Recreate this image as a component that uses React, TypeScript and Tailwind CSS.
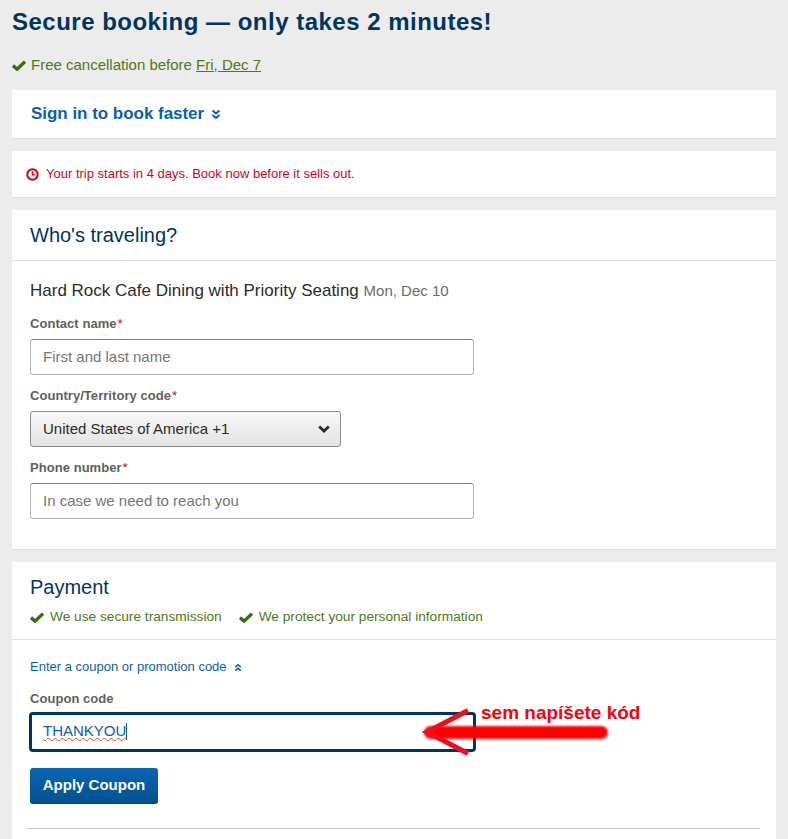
import React from "react";

const font = { fontFamily: '"Liberation Sans", Arial, sans-serif' };

function Check({ className }: { className: string }) {
  return (
    <svg viewBox="0 0 14 11" className={className} aria-hidden="true">
      <path d="M1 5.6 L5 9.2 L13 1.6" fill="none" stroke="#2f6f0e" strokeWidth="3.3" />
    </svg>
  );
}

function Chevrons({ up, className }: { up?: boolean; className: string }) {
  return (
    <svg viewBox="0 0 10 10" className={className} aria-hidden="true">
      <g fill="none" stroke="#0a5fad" strokeWidth="2" transform={up ? "rotate(180 5 5)" : undefined}>
        <path d="M1.5 1 L5 4 L8.5 1" />
        <path d="M1.5 5.5 L5 8.5 L8.5 5.5" />
      </g>
    </svg>
  );
}

function Label({ text, star = true, className = "" }: { text: string; star?: boolean; className?: string }) {
  return (
    <div className={`text-[13px] leading-4 font-bold text-[#5f5f5f] tracking-[0.05px] ${className}`}>
      {text}
      {star && <span className="font-normal text-[#d0021b] ml-[1px]">*</span>}
    </div>
  );
}

function TextBox({ placeholder }: { placeholder: string }) {
  return (
    <div className="w-[444px] h-[36px] mt-[7px] border border-[#b5b5b5] border-t-[#808080] rounded-[3px] pl-[12px] flex items-center text-[15px] text-[#767676] bg-white">
      {placeholder}
    </div>
  );
}

export default function App() {
  return (
    <div style={font} className="relative w-[788px] h-[839px] overflow-hidden bg-[#ececec]">
      <div className="px-[12px]">
        <h1 className="h-[45px] pt-[6px] text-[24px] leading-[32px] font-bold text-[#003560] tracking-[0.49px]">
          Secure booking — only takes 2 minutes!
        </h1>
        <div className="h-[45px] pb-[5px] flex items-center text-[15px] text-[#4d7a16]">
          <Check className="w-[14px] h-[11px] mr-[5px]" />
          <span>
            Free cancellation before <span className="underline">Fri, Dec 7</span>
          </span>
        </div>

        <section className="h-[48px] bg-white pl-[19px] flex items-center shadow-[0_1px_1px_#dedede]">
          <span className="text-[17px] font-bold text-[#0a5fad] tracking-[-0.03px]">Sign in to book faster</span>
          <Chevrons className="w-[10px] h-[11px] ml-[7px]" />
        </section>

        <section className="mt-[13px] h-[46px] bg-white pl-[14px] flex items-center text-[13px] text-[#d0021b] shadow-[0_1px_1px_#dedede]">
          <svg viewBox="0 0 14 14" className="w-[13px] h-[13px] mr-[7px]" aria-hidden="true">
            <circle cx="7" cy="7" r="5.6" fill="none" stroke="#d0021b" strokeWidth="2.2" />
            <path d="M7 3.6 V7.4 H10" fill="none" stroke="#d0021b" strokeWidth="1.6" />
          </svg>
          Your trip starts in 4 days. Book now before it sells out.
        </section>

        <section className="mt-[13px] h-[339px] bg-white shadow-[0_1px_1px_#dedede]">
          <div className="h-[51px] pl-[18px] flex items-center border-b border-[#e2e2e2] text-[20px] text-[#003560]">
            Who's traveling?
          </div>
          <div className="px-[18px]">
            <div className="pt-[20px] h-[50px] text-[17px] leading-5 text-[#2b2b2b]">
              Hard Rock Cafe Dining with Priority Seating{" "}
              <span className="text-[15px] text-[#6b6b6b]">Mon, Dec 10</span>
            </div>
            <Label text="Contact name" className="mt-[5px]" />
            <TextBox placeholder="First and last name" />
            <Label text="Country/Territory code" className="mt-[13px]" />
            <div className="w-[311px] h-[36px] mt-[7px] border border-[#8a8a8a] rounded-[3px] pl-[12px] pr-[10px] flex items-center justify-between text-[15px] text-[#2b2b2b] bg-gradient-to-b from-[#f7f7f7] to-[#e4e4e4]">
              United States of America +1
              <svg viewBox="0 0 12 8" className="w-[12px] h-[8px]" aria-hidden="true">
                <path d="M1.2 1.4 L6 6 L10.8 1.4" fill="none" stroke="#2b2b2b" strokeWidth="2.8" />
              </svg>
            </div>
            <Label text="Phone number" className="mt-[13px]" />
            <TextBox placeholder="In case we need to reach you" />
          </div>
        </section>

        <section className="mt-[13px] h-[300px] bg-white">
          <div className="h-[78px] border-b border-[#e2e2e2] px-[18px]">
            <div className="pt-[13px] h-[43px] text-[20px] leading-6 text-[#003560]">Payment</div>
            <div className="mt-[2px] flex items-center text-[13.7px] text-[#4d7a16]">
              <Check className="w-[14px] h-[11px] mr-[6px]" />
              <span className="mr-[17px]">We use secure transmission</span>
              <Check className="w-[14px] h-[11px] mr-[6px]" />
              <span>We protect your personal information</span>
            </div>
          </div>
          <div className="px-[18px]">
            <div className="pt-[19px] flex items-center text-[13px] leading-4 text-[#0a5fad]">
              Enter a coupon or promotion code
              <Chevrons up className="w-[8px] h-[9px] ml-[7px]" />
            </div>
            <Label text="Coupon code" star={false} className="mt-[16px]" />
            <div className="w-[447px] h-[40px] mt-[5px] -ml-[1px] border-[3px] border-[#003560] rounded-[4px] pl-[11px] pb-[1px] flex items-center text-[15px] text-[#0a5fad] bg-white">
              <span className="underline decoration-wavy decoration-[#e0413c] decoration-1 underline-offset-1">THANKYOU</span>
              <span className="w-[1px] h-[17px] bg-[#0a5fad]" />
            </div>
            <button className="mt-[16px] w-[128px] h-[36px] rounded-[3px] bg-gradient-to-b from-[#0a66b5] to-[#04508f] border-b border-[#03427a] text-[15px] font-bold text-white">
              Apply Coupon
            </button>
            <div className="mt-[24px] -mx-[2px] border-t border-[#c8c8c8]" />
          </div>
        </section>
      </div>

      <svg className="absolute left-[420px] top-[705px] w-[195px] h-[52px] pointer-events-none" viewBox="0 0 195 52" aria-hidden="true">
        <defs>
          <filter id="blur" x="-10%" y="-60%" width="120%" height="220%">
            <feGaussianBlur stdDeviation="1.2" />
          </filter>
        </defs>
        <rect x="4" y="21" width="184" height="13" rx="6.5" fill="#ff0000" filter="url(#blur)" />
        <path d="M48 5.5 L7 27 L48 48.5" fill="none" stroke="#ee0f1c" strokeWidth="5" />
      </svg>
      <div className="absolute left-[481px] top-[702px] text-[19px] leading-[22px] font-bold text-[#f8000c]">
        sem napíšete kód
      </div>
    </div>
  );
}
